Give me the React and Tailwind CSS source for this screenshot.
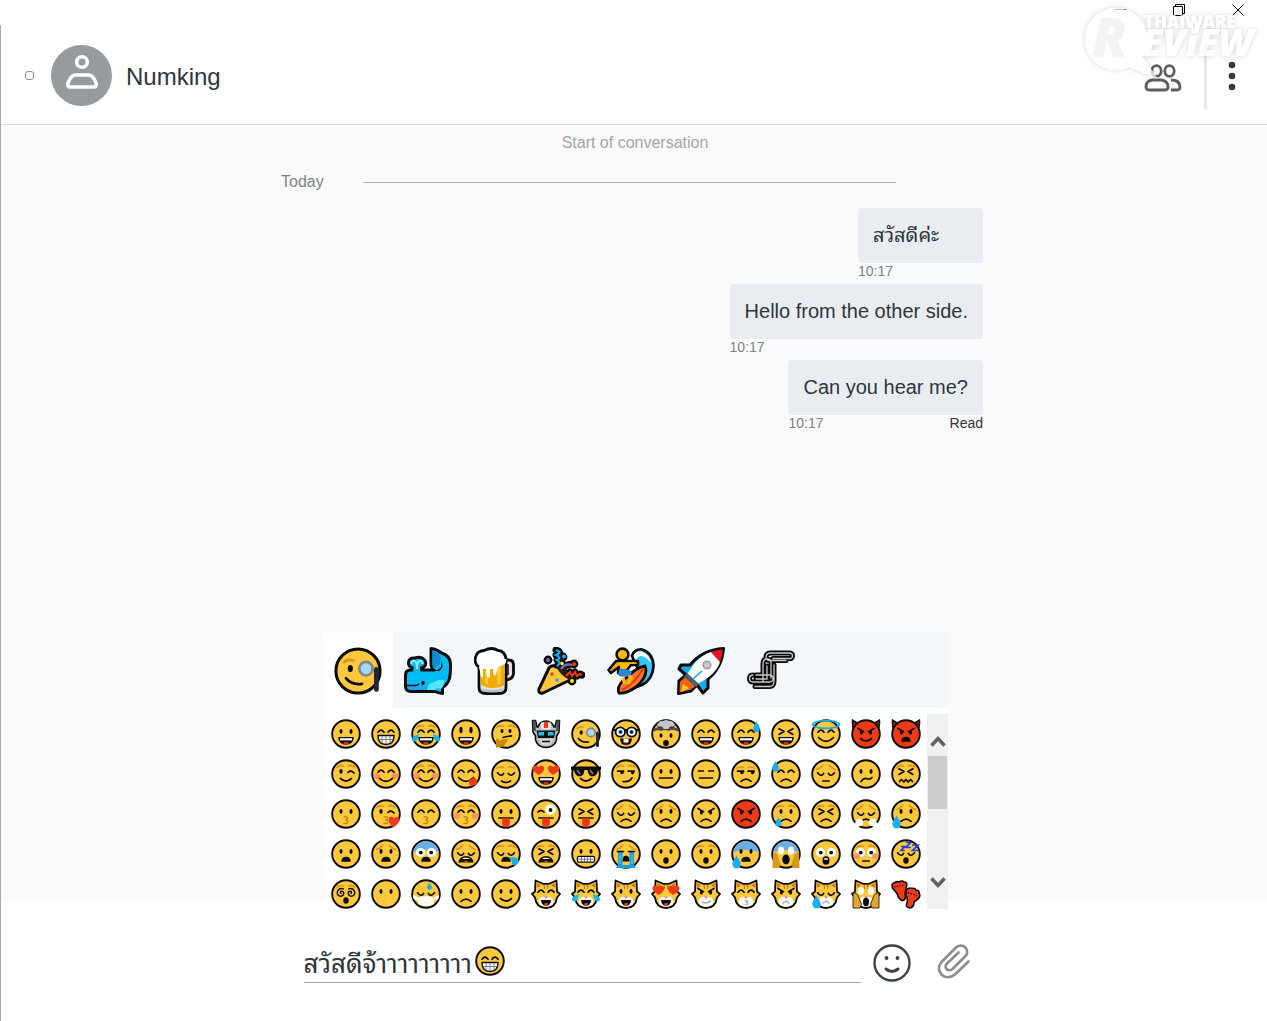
import React from "react";

const INK = "#0b0b0b";
const SKIN = "#ffc83d";
const BROWN = "#d99a1c";
const RED = "#f03a17";
const BLUE = "#00bcf2";

const line = { fill: "none", stroke: INK, strokeWidth: 1.7, strokeLinecap: "round", strokeLinejoin: "round" };
const browLine = { fill: "none", stroke: BROWN, strokeWidth: 1.8, strokeLinecap: "round" };

const eyeShapes = {
  dots: <g fill={INK}><ellipse cx="10" cy="12.4" rx="1.5" ry="2.3" /><ellipse cx="20" cy="12.4" rx="1.5" ry="2.3" /></g>,
  tall: <g fill={INK}><ellipse cx="10" cy="11" rx="1.6" ry="3.3" /><ellipse cx="20" cy="11" rx="1.6" ry="3.3" /></g>,
  happy: <path {...line} d="M7 13.2q3-4 6 0M17 13.2q3-4 6 0" />,
  shut: <path {...line} d="M6.600 13.800q3.200 4.600 6 0.600M17.400 14.400q2.800 4 6-.6" />,
  dash: <path {...line} d="M7.500 12h4.800M17.700 12h4.800" />,
  squint: <path {...line} d="M8 9.800l5 2.800-5 2.800M22 9.800l-5 2.800 5 2.800" />,
  wink: <g><ellipse cx="10" cy="12.400" rx="1.600" ry="2.400" fill={INK} /><path {...line} d="M17 13.400q3-2.800 6 .6" /></g>,
  side: <g><path {...line} d="M6.600 12.200h6M17.200 12.200h6" /><circle cx="11" cy="13.600" r="1.700" fill={INK} /><circle cx="21.600" cy="13.600" r="1.700" fill={INK} /></g>,
  angry: <g><path {...line} d="M7 9.500l5.500 3.200M23 9.500l-5.500 3.200" /><ellipse cx="10.400" cy="13.600" rx="1.500" ry="2.100" fill={INK} /><ellipse cx="19.600" cy="13.600" rx="1.500" ry="2.100" fill={INK} /></g>,
  wide: <g><circle cx="9.500" cy="13.500" r="4.600" fill="#fff" /><circle cx="20.500" cy="13.500" r="4.600" fill="#fff" /><circle cx="9.800" cy="13.600" r="1.900" fill={INK} /><circle cx="20.200" cy="13.600" r="1.900" fill={INK} /></g>,
  hearts: <path fill={RED} d="M1.500 9C1.500 6 6 5.500 7.500 8C10 5.500 14 7 13 10.500C12.400 13 9.500 14.500 8 16C5.500 14.500 1.500 12 1.500 9ZM28.500 9C28.500 6 24 5.500 22.500 8C20 5.500 16 7 17 10.500C17.600 13 20.500 14.500 22 16C24.500 14.500 28.500 12 28.500 9Z" />,
  spiral: <path {...line} strokeWidth="1.400" d="M10 14.500q-1.500-1.500.5-2.300q2.600 0 2.200 2.500q-1 3.300-4.500 2.200q-3-2-1.400-5.200q2-3 5.500-1.800M20 14.500q1.500-1.500-.5-2.300q-2.600 0-2.200 2.500q1 3.300 4.500 2.200q3-2 1.400-5.200q-2-3-5.500-1.800" />,
};

const openMouth = (
  <g>
    <path d="M7.300 18H22.700C22.700 23 19.500 25.700 15 25.700S7.300 23 7.300 18Z" fill={INK} />
    <path d="M9 19.200H21V21.400H9Z" fill="#fff" />
    <path d="M11.500 24.300Q15 21.600 18.500 24.300Q15 25.600 11.500 24.300Z" fill={RED} />
  </g>
);
const tongue = (
  <g>
    <path {...line} d="M8 19H22" />
    <path d="M11.100 19.300H18.900V24.500Q18.600 28.200 15 28.200Q11.400 28.200 11.100 24.500Z" fill={RED} />
    <path d="M15 20v4" stroke="#b9230c" strokeWidth="1" />
  </g>
);
const mouthShapes = {
  open: openMouth,
  tongue,
  teeth: (
    <g>
      <path d="M7 16.500H23C23 22.500 20 25.500 15 25.500S7 22.500 7 16.500Z" fill="#fff" stroke={INK} strokeWidth="1.400" />
      <path d="M7.500 20.500H22.500M11 17v7M15 17v8M19 17v7" stroke="#53627c" strokeWidth=".8" fill="none" />
    </g>
  ),
  smile: <path {...line} d="M9.500 19.500Q15 24.500 20.500 19.500" />,
  wideSmile: <path {...line} d="M7.500 18.500Q15 26 22.500 18.500" />,
  small: <path {...line} d="M10.500 22Q15 25 19.500 22" />,
  flat: <path {...line} d="M8.500 19H21.500" />,
  shortFlat: <path {...line} d="M11.800 22H18.200" />,
  frown: <path {...line} d="M10 22.400Q15 17.800 20 22.400" />,
  bigFrown: <path d="M10.300 22.800Q10.300 17.800 15 17.800T19.700 22.800Z" fill={INK} />,
  smirk: <path {...line} d="M12 22.500Q18 23.500 21 19" />,
  skew: <path {...line} d="M10 22.500Q13 18.500 16 19.700T21 18.500" />,
  wavy: <path {...line} d="M8.500 22.500L10.500 20.500L12.800 23L15 20.500L17.200 23L19.500 20.500L21.500 22.500" />,
  o: <ellipse cx="15" cy="21.500" rx="2.700" ry="3.200" fill={INK} />,
  shout: <g><ellipse cx="15" cy="21.500" rx="3.500" ry="4.200" fill={INK} /><path d="M13.200 19.300h3.600v1.500h-3.600Z" fill="#fff" /></g>,
  wail: <g><path d="M7.500 23.500Q8.500 17 15 17T22.500 23.500Z" fill={INK} /><path d="M10.500 20Q15 17 19.500 20Z" fill="#fff" /><path d="M12 23Q15 20.500 18 23Z" fill={RED} /></g>,
  kiss: <path fill="none" stroke="#c98a12" strokeWidth="1.500" strokeLinecap="round" d="M13 18q4.300-.8 3.500 1.400q-.5 1.200-2.500 1.500q3.400.2 3 2q-.6 1.900-4 1.400" />,
  grimace: <g><rect x="6.500" y="17.300" width="17" height="5.900" rx="1.500" fill="#fff" stroke={INK} strokeWidth="1.300" /><path d="M7.500 20.200h15M10.500 18v5M13.500 18v5M16.500 18v5M19.500 18v5" stroke="#53627c" strokeWidth=".8" /></g>,
};

const browShapes = {
  up: <path {...browLine} d="M6 8.500Q8.500 5.500 12.500 7M17.500 7Q21.500 5.500 24 8.500" />,
  sad: <path {...browLine} d="M5.500 10.500Q9.500 9.500 11.500 6.500M18.500 6.500Q20.500 9.500 24.500 10.500" />,
  low: <path {...browLine} d="M6 9Q10 7.500 12.500 8.500M17.500 8.500Q20 7.500 24 9" />,
};

const drop = (x, y, s = 1) => (
  <path transform={`translate(${x} ${y}) scale(${s})`} d="M0-4.500C1 -2 3 -.5 3 2A3 3 0 0 1-3 2C-3-.5-1-2 0-4.500Z" fill="#19aef0" />
);

const extraShapes = {
  blush: <g fill="#ff8a63" opacity=".85"><circle cx="6" cy="17" r="3" /><circle cx="24" cy="17" r="3" /></g>,
  joy: <g fill={BLUE}><path d="M8 15C7 20.500 5 23.500 2.500 22.300C-.5 20.500 1 17 8 15Z" /><path d="M22 15C23 20.500 25 23.500 27.500 22.300C30.500 20.500 29 17 22 15Z" /></g>,
  sweatRight: drop(25.500, 7.500, 1.1),
  sweatLeft: drop(4.500, 7, 1.1),
  tearLeft: drop(7.500, 22.500, 1),
  tearEdge: drop(5.500, 22.500, 1.400),
  snot: <path d="M19 18.500Q26 17.500 27.500 21.500Q27 26.500 22.500 26Q20.500 25 20.800 22Q19 21 19 18.500Z" fill="#19aef0" />,
  halo: <ellipse cx="15" cy="5.500" rx="13.300" ry="3.900" fill="none" stroke="#12aeef" strokeWidth="1.800" />,
  lick: <path d="M17.500 21Q21.500 20 22.500 18.500Q26.500 19.500 26.500 24Q23 28 18.500 26Z" fill={RED} />,
  heart: <path d="M17.500 21C17 17.500 21.500 16.500 23 19.500C25 16.500 29.500 18 28.500 22C27 25 23.500 27 22.500 28.500C20 26 18 24 17.500 21Z" fill={RED} />,
  bigWink: <g><circle cx="19.500" cy="10.500" r="5.200" fill="#fff" /><circle cx="19.500" cy="11" r="1.900" fill={INK} /><path {...line} d="M7 13q3-3 6 0" /></g>,
  hand: <path d="M5 28.500V20.500Q6.500 18 8.500 21.500Q13 19.500 18 20.500Q15.500 22 14.500 24.500Q13 28.800 5 28.500Z" fill="#c88a00" />,
  thinking: <g><path {...line} d="M12 18.500Q15 17.500 20.500 16.800" /><ellipse cx="11" cy="12" rx="1.500" ry="2.100" fill={INK} /><ellipse cx="19" cy="12" rx="1.500" ry="2.100" fill={INK} /></g>,
  shades: <g><path d="M0 7.500H30V11L27 11Q26 17.500 21 17.500Q17 16.500 16.500 11H13.500Q13 17.500 8 17.500Q4 16.500 3 11H0Z" fill={INK} /><path d="M6 11l3 4M19 11l3 4" stroke="#77818a" strokeWidth="1.600" /></g>,
  nerd: (
    <g>
      <path d="M1 11H29" stroke={INK} strokeWidth="2" />
      <circle cx="9.300" cy="13" r="4.700" fill="#fff" stroke={INK} strokeWidth="1.800" />
      <circle cx="20.700" cy="13" r="4.700" fill="#fff" stroke={INK} strokeWidth="1.800" />
      <circle cx="9.500" cy="13" r="2.300" fill="#38aee5" /><circle cx="20.500" cy="13" r="2.300" fill="#38aee5" />
      <circle cx="9.500" cy="13" r="1.400" fill={INK} /><circle cx="20.500" cy="13" r="1.400" fill={INK} />
      <path d="M9 19.500H21Q20.500 26.300 15 26.300T9 19.500Z" fill={INK} /><path d="M12.500 19.500h5v4h-5Z" fill="#fff" />
      <path d="M12.500 25.300q2.500-1.500 5 0Z" fill={RED} />
    </g>
  ),
  monocle: (
    <g>
      <path d="M6.500 9.500Q8.500 7 12 8.500" {...browLine} />
      <ellipse cx="10.200" cy="13.500" rx="1.600" ry="2.200" fill={INK} />
      <path {...line} d="M7.500 19.500Q11 24 17.500 23" />
      <path d="M26.500 14V26.500" stroke="#24272b" strokeWidth="3" strokeLinecap="round" />
      <circle cx="20" cy="13.500" r="4.200" fill="#a9d8f2" stroke="#808890" strokeWidth="1.700" />
    </g>
  ),
  blown: (
    <g>
      <path d="M2.500 9.500Q15 5 27.500 9.500L27 12.500Q21 10 18 12Q14 10 10 12Q7 10.500 3 12.500Z" fill="#4b4f54" />
      <path d="M8 8Q4 6.500 7 4Q8 .8 12 1.500Q15-.5 18 1.500Q22 .8 23 4Q26 6.500 22 8Q19 6.500 17.500 10.500H12.500Q11 6.500 8 8Z" fill="#c4c7ca" stroke={INK} strokeWidth=".7" />
      <ellipse cx="10" cy="16.500" rx="1.500" ry="2.300" fill={INK} /><ellipse cx="20" cy="16.500" rx="1.500" ry="2.300" fill={INK} />
      <circle cx="15" cy="24" r="2.900" fill={INK} />
    </g>
  ),
  coldTop: <path d="M2 13A13.200 13.200 0 0 1 28 13Q15 9 2 13Z" fill="#6eaee8" />,
  mask: <g><path d="M2 16L8 18.500Q15 15.500 22 18.500L28 16L27.500 20L23 21.500V25Q15 29 7 25V21.500L2.500 20Z" fill="#fff" />{drop(18.500, 7, .8)}</g>,
  steam: <g fill="#fff"><circle cx="8.500" cy="23.500" r="3.700" /><circle cx="21.500" cy="23.500" r="3.700" /><circle cx="5.500" cy="26" r="2.700" /><circle cx="24.500" cy="26" r="2.700" /></g>,
  rivers: <g><path d="M7 13h4.500V26H18.500V13H23V26L25 29H5L7 26Z" fill="#159fe5" /><path d="M9 16v9M21 16v9" stroke="#66d2fa" strokeWidth="1" /><path {...line} d="M6.500 12.500h6M17.500 12.500h6" /><path d="M11.500 22.500Q11.500 16.500 15 16.500T18.500 22.500Z" fill={INK} /></g>,
  zzz: <g fill="none" stroke="#1743e8" strokeWidth="1.700"><path d="M10 7.500h3.500l-3.500 4h3.800M14.800 3.500h4.700L15 8.500h5M21 6h6l-5.500 5.500H28" /></g>,
  scream: (
    <g>
      <path d="M2 14Q5 12 7 17L9.500 25L8 29H1.500ZM28 14Q25 12 23 17L20.500 25L22 29H28.500Z" fill="#d99a1c" />
      <ellipse cx="10" cy="11.500" rx="3" ry="3.900" fill="#fff" /><ellipse cx="20" cy="11.500" rx="3" ry="3.900" fill="#fff" />
      <ellipse cx="15" cy="20.500" rx="3.700" ry="5" fill={INK} />
    </g>
  ),
};

function Face({ eyes, mouth, brows, extras = [], color = SKIN, horns }) {
  return (
    <>
      {horns && <path d="M1.500 1Q5 4 10 4L3 12Q.8 7 1.500 1ZM28.500 1Q25 4 20 4L27 12Q29.200 7 28.500 1Z" fill="#8e1510" stroke={INK} strokeWidth="1.300" />}
      <circle cx="15" cy="15" r="13.800" fill={color} stroke={INK} strokeWidth="1.900" />
      {extras.includes("coldTop") && extraShapes.coldTop}
      {brows && browShapes[brows]}
      {eyes && eyeShapes[eyes]}
      {mouth && mouthShapes[mouth]}
      {extras.filter((e) => e !== "coldTop").map((e) => <g key={e}>{extraShapes[e]}</g>)}
    </>
  );
}

const catMouths = {
  grin: <g><path d="M10 21H20Q19.500 26.800 15 26.800T10 21Z" fill={INK} /><path d="M12.500 25.300Q15 22.500 17.500 25.300Q15 26.800 12.500 25.300Z" fill={RED} /></g>,
  smirk: <path d="M11 23Q17 25.500 20 21.500" stroke="#a9abad" strokeWidth="1.500" fill="none" />,
  kiss: <path d="M13.500 21.500q4-.5 2.500 1.500l-1.500.5q3.500.5 2 2l-3 .5" stroke="#a9abad" strokeWidth="1.200" fill="none" />,
  frown: <path d="M11.500 24.500Q15 20 18.500 24.500" stroke="#a9abad" strokeWidth="1.400" fill="none" />,
  scream: <ellipse cx="15" cy="23" rx="3" ry="4.200" fill={INK} />,
};

function Cat({ eyes, mouth, extras = [], paws }) {
  return (
    <>
      <path d="M4.500 1.500L12 4.800H18L25.500 1.500L26 12.500L29 15L26 18.500C25 25.500 21 29 15 29S5 25.500 4 18.500L1 15L4 12.500Z" fill={SKIN} stroke={INK} strokeWidth="1.800" strokeLinejoin="round" />
      <path d="M6 4L10 6L6.500 9ZM24 4L20 6L23.500 9ZM12.500 5.700H14V10H13ZM16 5.700H17.500L17 10H16Z" fill="#c5761d" />
      <ellipse cx="15" cy="22.500" rx="7.500" ry="5.300" fill="#fff" />
      {eyes === "scream"
        ? <g fill="#fff"><ellipse cx="10" cy="12" rx="3" ry="4" /><ellipse cx="20" cy="12" rx="3" ry="4" /></g>
        : eyeShapes[eyes]}
      <path d="M13 17.300h4L15 20Z" fill="#ff7d63" />
      {catMouths[mouth]}
      {paws && <path d="M2 14Q6 13 8 19L10.500 25L9 29H2ZM28 14Q24 13 22 19L19.500 25L21 29H28Z" fill="#e8a529" stroke={INK} strokeWidth=".8" />}
      {extras.map((e) => <g key={e}>{extraShapes[e]}</g>)}
    </>
  );
}

function Robot() {
  return (
    <>
      <path d="M1.500 1.500H4.500L6 8H7Q9 2 15 2T23 8H24L25.500 1.500H28.500L28 13L25.500 17V21Q23 28.500 15 28.500T4.500 21V17L2 13Z" fill="#b8bdc2" stroke={INK} strokeWidth="1.600" strokeLinejoin="round" />
      <path d="M1.500 1.500H4.500L5 12H2.500ZM25.500 1.500H28.500L27.500 12H25Z" fill="#4b5057" />
      <path d="M10 3.500h10v7H10Z" fill="#e5e8ea" /><path d="M13 3h4v6h-4Z" fill={RED} />
      <path d="M5.500 11.500H24.500L23 19H7Z" fill={INK} />
      <path d="M7.500 13H13v3.500H7.500ZM17 13h5.500v3.500H17Z" fill="#1fc1ee" />
      <path d="M8 20H22L19 26H11Z" fill="#d5d9dc" /><path d="M11 22.500h8" stroke={INK} strokeWidth="1.500" />
    </>
  );
}

function Footprints() {
  return (
    <g fill={RED} stroke={INK} strokeWidth="1.600" strokeLinejoin="round">
      <path d="M1.500 9Q0 4 4 3.500Q6 2 8 3Q11 1 13 3Q16.500 3 15.500 7L14.500 12Q14 16 14.500 19Q13 22.500 10 21Q7 19 6 14.500Z" />
      <path d="M15.500 11Q18 8 21 9.500Q24 8.500 25 11Q28.500 11 28 14Q30 17 27 20L23 23Q23 28.500 18.500 29Q14 28 16 24Q17 20 15 16Z" />
      <path d="M3 8L13.500 6M17 13.500L27 17" strokeWidth="1.100" strokeDasharray="1.500 1.200" />
    </g>
  );
}

const f = (label, eyes, mouth, brows, extras, rest) => ({ label, eyes, mouth, brows, extras: extras ?? [], ...rest });
const cat = (label, eyes, mouth, extras, rest) => ({ label, kind: "cat", eyes, mouth, extras: extras ?? [], ...rest });
const grinCheesy = f("Beaming face", "happy", "teeth");

const emojis = [
  f("Grinning face", "dots", "open"),
  grinCheesy,
  f("Tears of joy", "happy", "open", "up", ["joy"]),
  f("Big smile", "tall", "open"),
  f("Thinking", null, null, "up", ["thinking", "hand"]),
  { label: "Robot", kind: "robot" },
  f("Monocle", null, null, null, ["monocle"]),
  f("Nerd", null, null, null, ["nerd"]),
  f("Mind blown", null, null, null, ["blown"]),
  f("Smiling eyes", "happy", "open"),
  f("Nervous grin", "happy", "open", null, ["sweatRight"]),
  f("Laughing", "squint", "open"),
  f("Angel", "happy", "wideSmile", null, ["halo"]),
  f("Smiling devil", "angry", "smile", null, [], { color: RED, horns: true }),
  f("Angry devil", "angry", "bigFrown", null, [], { color: RED, horns: true }),

  f("Winking", "wink", "smile", "up"),
  f("Blushing", "happy", "wideSmile", null, ["blush"]),
  f("Warm smile", "happy", "wideSmile", "up", ["blush"]),
  f("Yummy", "happy", "wideSmile", null, ["lick"]),
  f("Relieved", "shut", "small", "low"),
  f("Heart eyes", "hearts", "open"),
  f("Sunglasses", null, "smile", null, ["shades"]),
  f("Smirking", "side", "smirk", "up"),
  f("Neutral", "dots", "flat"),
  f("Expressionless", "dash", "flat"),
  f("Unamused", "side", "frown", "low"),
  f("Cold sweat", "happy", "frown", null, ["sweatLeft"]),
  f("Pensive", "shut", "shortFlat", "sad"),
  f("Confused", "dots", "skew"),
  f("Confounded", "squint", "wavy", "up"),

  f("Kissing", "dots", "kiss"),
  f("Blowing a kiss", "wink", "kiss", "up", ["heart"]),
  f("Kissing with smiling eyes", "happy", "kiss"),
  f("Kissing with blush", "happy", "kiss", "up", ["blush"]),
  f("Tongue out", "dots", "tongue"),
  f("Winking tongue out", null, "tongue", null, ["bigWink"]),
  f("Squinting tongue out", "squint", "tongue"),
  f("Disappointed", "shut", "frown", "sad"),
  f("Worried", "dots", "frown", "sad"),
  f("Angry", "angry", "frown"),
  f("Furious", "angry", "frown", null, [], { color: RED }),
  f("Crying", "dots", "frown", "up", ["tearLeft"]),
  f("Persevering", "squint", "frown", "up"),
  f("Triumphant", "shut", "frown", "sad", ["steam"]),
  f("Sad but relieved", "dots", "frown", "sad", ["tearEdge"]),

  f("Frowning, open mouth", "dots", "bigFrown"),
  f("Anguished", "dots", "bigFrown", "sad"),
  f("Fearful", "wide", "bigFrown", null, ["coldTop"]),
  f("Weary", "shut", "wail", "sad"),
  f("Sleepy", "shut", "bigFrown", "up", ["snot"]),
  f("Tired", "squint", "wail", "up"),
  f("Grimacing", "dots", "grimace"),
  f("Sobbing", null, null, "sad", ["rivers"]),
  f("Surprised", "dots", "o"),
  f("Hushed", "dots", "o", "up"),
  f("Anxious", "dots", "bigFrown", null, ["coldTop", "tearEdge"]),
  f("Screaming", null, null, null, ["coldTop", "scream"]),
  f("Astonished", "wide", "shout"),
  f("Flushed", "wide", "shortFlat", "up", ["blush"]),
  f("Sleeping", "shut", "o", null, ["zzz"]),

  f("Dizzy", "spiral", "o", "up"),
  f("No mouth", "dots"),
  f("Medical mask", "shut", null, null, ["mask"]),
  f("Slight frown", "dots", "frown"),
  f("Slight smile", "dots", "smile"),
  cat("Grinning cat", "happy", "grin"),
  cat("Cat with tears of joy", "happy", "grin", ["joy"]),
  cat("Smiling cat", "dots", "grin"),
  cat("Heart eyes cat", "hearts", "grin"),
  cat("Smirking cat", "angry", "smirk"),
  cat("Kissing cat", "happy", "kiss"),
  cat("Pouting cat", "angry", "frown"),
  cat("Crying cat", "shut", "frown", ["tearEdge"]),
  cat("Screaming cat", "scream", "scream", [], { paws: true }),
  { label: "Footprints", kind: "feet" },
];

function Emoji({ item, className = "size-[30px]" }) {
  const { kind, label, ...parts } = item;
  return (
    <svg viewBox="0 0 30 30" className={className} aria-hidden="true">
      {kind === "robot" ? <Robot /> : kind === "feet" ? <Footprints /> : kind === "cat" ? <Cat {...parts} /> : <Face {...parts} />}
    </svg>
  );
}

const Whale = () => (
  <svg viewBox="0 0 48 48" className="size-12" aria-hidden="true">
    <path d="M27 1.500C32 2 35 4 37.500 6C44 8 47 12 46.500 19C46.500 29 46 36 38.500 40.500V46.500Q34 46 31 44.500H7Q1.500 44.500 1.500 39V28Q1.500 23 6.500 23H8V20.500Q4.500 20 4.500 15.500Q5 10.500 11 11Q16 9 19.500 12Q22.500 14 21.500 18Q20 20.500 17.500 20.500V23H30Q27 21 27 16Z" fill="#00bcf2" stroke={INK} strokeWidth="3" strokeLinejoin="round" />
    <path d="M28.500 3Q36 5 37 12Q36 18 30 22Q28 20 28.500 16Z" fill="#0c8fd0" />
    <path d="M16 23H33Q39 21 37 14Q41 20 35 24H16Z" fill={INK} />
    <path d="M7.500 17Q7 13.500 10 14Q13 14 13 22M18.500 17Q18 13 15.500 14Q13 15 13 20" fill="none" stroke="#8fe5f8" strokeWidth="2.200" />
    <path d="M3 39H28Q30 36 29 43H7Q3 43 3 39Z" fill="#1ba8e8" />
    <path d="M3 38.500H11Q14 38.500 15 36.500" fill="none" stroke={INK} strokeWidth="1.600" />
    <ellipse cx="19" cy="36" rx="1.600" ry="2.200" fill={INK} />
    <path d="M23 43Q23 37 30 35Q35 32 40 33Q41 38 37 42Q33 40 31 43Z" fill="#50e6ff" />
  </svg>
);

const Beer = () => (
  <svg viewBox="0 0 41 48" className="h-12 w-[41px]" aria-hidden="true">
    <path d="M30 13H35Q39.500 13 39.500 18V27Q38.500 33 30 33" fill="#e7dedd" stroke={INK} strokeWidth="2.800" />
    <path d="M31 18H34V27L31 29Z" fill="#fff" stroke={INK} strokeWidth="1.500" />
    <path d="M5 15V41Q5 46.500 12 46.500H25Q32 46.500 32 41V15Z" fill="#e4e4e4" stroke={INK} strokeWidth="2.800" />
    <path d="M6.500 17H30.500V38Q26 41 18.500 41T6.500 37Z" fill="#f2a900" />
    <path d="M23 18h4v19h-4ZM11 24h3v13h-3Z" fill="#ffc83d" />
    <path d="M7 41Q18 45 30 41L29 44Q18 47 8 44Z" fill="#bdbfc1" />
    <path d="M5 20Q0 17 1.500 10Q3 4 10 3.500Q18-.5 24 3.500Q31 4 32 10Q33 15 31 17Q27 19 24 20L22 27Q20 31 19 25V22H16V30Q14 32 13 29L12 22H9V30Q6.500 31 6.500 27Z" fill="#fff" />
    <path d="M5 20Q0 17 1.500 10Q3 4 10 3.500Q18-.5 24 3.500Q31 4 32 12" fill="none" stroke={INK} strokeWidth="2.800" />
  </svg>
);

const Popper = () => (
  <svg viewBox="0 0 48 48" className="size-12" aria-hidden="true">
    <path d="M19 3Q26 5 19 8Q25 11 20 13Q25 16 20 19M24 22Q29 17 36 17M29 29l4-4 2 4 3-4 2 4 3-2 2 1" fill="none" stroke={INK} strokeWidth="7" strokeLinecap="round" strokeLinejoin="round" />
    <g fill={INK}><circle cx="11" cy="13" r="4.400" /><circle cx="26" cy="10" r="4.400" /><circle cx="25" cy="17" r="4.400" /><circle cx="37" cy="17" r="4.400" /><circle cx="35" cy="34" r="4.400" /></g>
    <path d="M19 20Q31 20 33 33L6 46Q1 47 2 42L12 21Q15 17 19 20Z" fill={SKIN} stroke={INK} strokeWidth="3" strokeLinejoin="round" />
    <path d="M19 20Q32 18 33 33Q25 30 19 20Z" fill="#2a1a12" />
    <path d="M19 3Q26 5 19 8Q25 11 20 13Q25 16 20 19" fill="none" stroke="#18a8ed" strokeWidth="2.300" />
    <path d="M24 22Q28 16 35 18" fill="none" stroke="#8661c5" strokeWidth="2.300" />
    <path d="M29 29l4-4 2 4 3-4 2 4 3-2 2 1" fill="none" stroke={RED} strokeWidth="2" />
    <circle cx="11" cy="13" r="1.900" fill="#8661c5" /><circle cx="27" cy="9.500" r="2" fill="#18a8ed" /><circle cx="25" cy="16.500" r="1.800" fill="#fff100" />
    <circle cx="37" cy="17" r="2" fill={RED} /><circle cx="35" cy="34" r="2" fill="#fff100" />
    <circle cx="15" cy="27" r="1.700" fill={RED} /><circle cx="20" cy="33" r="1.700" fill="#18a8ed" />
  </svg>
);

const Surfer = () => (
  <svg viewBox="0 0 48 48" className="size-12" aria-hidden="true">
    <path d="M25 9Q27 2 35 2.500Q46 6 46.500 19Q46 32 35 38L24 42L31 22Z" fill="#32c8f4" stroke={INK} strokeWidth="2.800" strokeLinejoin="round" />
    <path d="M26.500 9Q29 3.500 35 4.500Q43 8 44 16Q38 8 33 9Q30 10 29 14Z" fill="#fff" />
    <path d="M12 46Q9 39 19 31Q30 20 38 19Q42 29 29 40Q19 47 12 46Z" fill="#f7752f" stroke={INK} strokeWidth="2.800" />
    <path d="M15 43Q27 37 36 22" stroke="#d83b01" strokeWidth="2" fill="none" />
    <path d="M9 14H31V18H24L20 23L14 28L11 26L12 20L4 26L1.500 23Z" fill="#f5a800" stroke={INK} strokeWidth="2.600" strokeLinejoin="round" />
    <path d="M21 27l3 4-3 6M16 31l2 6" fill="none" stroke="#ffb900" strokeWidth="3.500" />
    <path d="M13 21L22 23Q26 24 24 28L16 30L11 27Z" fill="#2b88d8" />
    <path d="M10 15.500H29V17H23L19 22L13 21.500V18Z" fill="#ffb900" />
    <circle cx="15.500" cy="7.500" r="5.900" fill="#ffb900" stroke={INK} strokeWidth="2.600" />
  </svg>
);

const Rocket = () => (
  <svg viewBox="0 0 48 48" className="size-12" aria-hidden="true">
    <path d="M13 18H4L2 22L9 28L2 34L1.500 46.500L14 44L20 38L26 46L31 41V32Q45 21 46.500 1.500Q25 3 13 18Z" fill="#18a8ed" stroke={INK} strokeWidth="3" strokeLinejoin="round" />
    <path d="M8 30L18 40L12 43L2.500 45.500L3 35Z" fill="#f7630c" /><path d="M6 37l6 4-8 4Z" fill="#ffc83d" />
    <path d="M34 5Q20 9 10 28L20 37Q39 28 43 15Z" fill="#fff" />
    <path d="M34 5Q41 2.500 45.500 2.500Q45.500 9 43 15Z" fill="#e81224" />
    <path d="M10 26L22 37L19 40L7 30Z" fill="#535b65" />
    <path d="M16 32L25 24" stroke="#18a8ed" strokeWidth="1.600" />
    <circle cx="30" cy="18" r="3.800" fill="#c7c7c7" stroke="#999" strokeWidth="1.500" />
  </svg>
);

const Clips = () => {
  const d = "M39 13.500H23Q19 13.500 19 10T23 6H42Q45.500 6 45.500 9T42 11.500H26M16 34V17Q16 12 20 12Q24 12 24 16V31M27 34V18M20 32V19M9 28H22Q26 28 26 31.500T22 35H6Q2.500 35 2.500 31.500T6 28M8 39.500H23Q27 39 27 34M9 32H20";
  return (
    <svg viewBox="0 0 48 48" className="size-12" fill="none" strokeLinecap="round" strokeLinejoin="round" aria-hidden="true">
      <path d={d} stroke={INK} strokeWidth="5" />
      <path d={d} stroke="#c8c8c8" strokeWidth="1.300" />
    </svg>
  );
};

const categories = [
  { label: "Faces", icon: <Emoji item={emojis[6]} className="size-12" /> },
  { label: "Nature", icon: <Whale /> },
  { label: "Food", icon: <Beer /> },
  { label: "Celebration", icon: <Popper /> },
  { label: "Activities", icon: <Surfer /> },
  { label: "Travel", icon: <Rocket /> },
  { label: "Objects", icon: <Clips /> },
];

function EmojiPicker() {
  return (
    <section aria-label="Emoji picker" className="absolute inset-x-0 bottom-[-8px] mx-auto w-[625px] bg-white">
      <div role="tablist" className="flex h-[75px] bg-[#f3f7fa]">
        {categories.map(({ label, icon }, i) => (
          <button key={label} type="button" role="tab" aria-label={label} aria-selected={i === 0} className="flex items-center px-[11px] pt-px aria-selected:bg-white">
            {icon}
          </button>
        ))}
      </div>
      <div className="mt-1.5 flex h-[195px]">
        <div className="grid flex-1 grid-cols-[repeat(15,40px)] grid-rows-[repeat(5,40px)] overflow-hidden pl-[3px]">
          {emojis.map((item) => (
            <button key={item.label} type="button" aria-label={item.label} className="flex items-center justify-center">
              <Emoji item={item} />
            </button>
          ))}
        </div>
        <div className="flex w-[21px] flex-col items-center bg-[#f0f0f0] pt-5">
          <svg viewBox="0 0 16 14" className="h-3.5 w-4" aria-hidden="true"><path d="M1.500 11.500L8 4.500L14.500 11.500" fill="none" stroke="#606060" strokeWidth="3.500" /></svg>
          <div className="mt-2 h-[53px] w-[19px] bg-[#cdcdcd]" />
          <svg viewBox="0 0 16 14" className="mt-auto mb-5 h-3.5 w-4" aria-hidden="true"><path d="M1.500 3.500L8 10.500L14.500 3.500" fill="none" stroke="#606060" strokeWidth="3.500" /></svg>
        </div>
      </div>
    </section>
  );
}

const messages = [
  { text: "สวัสดีค่ะ", time: "10:17" },
  { text: "Hello from the other side.", time: "10:17" },
  { text: "Can you hear me?", time: "10:17", status: "Read" },
];

function Watermark() {
  return (
    <svg viewBox="0 0 187 90" className="pointer-events-none absolute top-0 right-0 h-[90px] w-[187px]" aria-hidden="true">
      <defs>
        <filter id="halo" x="-20%" y="-20%" width="140%" height="140%">
          <feDropShadow dx="0" dy="0" stdDeviation="2.500" floodColor="#000" floodOpacity=".25" />
        </filter>
      </defs>
      <g filter="url(#halo)" fill="#fff" opacity=".75">
        <path d="M34 8A31 31 0 0 1 62 56L78 79L49 67A31 31 0 1 1 34 8Z" />
        <g fontFamily="'Open Sans', 'Liberation Sans', sans-serif" fontWeight="800">
          <text x="64" y="28" fontSize="17">THAiWARE</text>
          <text x="62" y="56" fontSize="37" fontStyle="italic">EViEW</text>
        </g>
      </g>
      <text x="12" y="57" fontSize="54" fontStyle="italic" fontWeight="800" fontFamily="'Open Sans', 'Liberation Sans', sans-serif" fill="#f3f3f3">R</text>
    </svg>
  );
}

export default function App() {
  return (
    <div className="relative flex h-screen min-h-[700px] flex-col overflow-hidden bg-white font-['Liberation_Sans','Noto_Sans_Thai_Looped','Loma',sans-serif] text-[#2f3539]">
      <div className="flex h-[25px] shrink-0 items-start justify-end gap-[47px] pt-1 pr-[23px] text-black">
        <button type="button" aria-label="Minimize">
          <svg viewBox="0 0 12 12" className="size-3" aria-hidden="true"><path d="M0 5.500H12" stroke="currentColor" /></svg>
        </button>
        <button type="button" aria-label="Restore">
          <svg viewBox="0 0 12 12" className="size-3" fill="none" stroke="currentColor" aria-hidden="true"><path d="M.5 2.500H9.500V11.500H.5ZM2.500 2.500V.5H11.500V9.500H9.500" /></svg>
        </button>
        <button type="button" aria-label="Close">
          <svg viewBox="0 0 12 12" className="size-3" fill="none" stroke="currentColor" aria-hidden="true"><path d="M.5 .5L11.500 11.500M11.500 .5L.5 11.500" /></svg>
        </button>
      </div>

      <div className="flex min-h-0 flex-1 flex-col border-l border-[#a9a9a9]">
        <header className="flex h-[100px] shrink-0 items-center border-b border-[#dcdcdc] pt-0.5 pl-6">
          <span className="size-[9px] rounded-[3px] border border-[#8e9193]" />
          <span className="ml-[17px] flex size-[61px] items-center justify-center rounded-full bg-[#979b9e]">
            <svg viewBox="0 0 36 36" className="-mt-2 size-9" fill="none" stroke="#fff" strokeWidth="3.600" aria-hidden="true">
              <circle cx="18" cy="8" r="5.300" />
              <path d="M11.500 21H24.500Q29 21 32 29Q33 33 29.500 33H6.500Q3 33 4 29Q7 21 11.500 21Z" />
            </svg>
          </span>
          <h1 className="ml-3.5 pt-0.5 text-2xl">Numking</h1>
          <button type="button" aria-label="Add people" className="ml-auto">
            <svg viewBox="0 0 38 30" className="mt-1 h-[30px] w-[38px]" fill="none" stroke="#5c5e60" strokeWidth="2.800" aria-hidden="true">
              <ellipse cx="12.500" cy="8" rx="4.700" ry="5.300" /><ellipse cx="25.500" cy="8" rx="4.700" ry="5.300" />
              <path d="M8 17H17.500Q24 18 24 24Q24 27 21 27H5Q2 27 2 24Q2 18 8 17ZM27 17Q36 17 36 24Q36 27 33 27H27" />
            </svg>
          </button>
          <span className="mt-1 ml-[22px] h-[63px] w-[3px] bg-[#e9e9e6]" />
          <button type="button" aria-label="More options" className="mr-[31px] ml-[21px]">
            <svg viewBox="0 0 8 30" className="h-[30px] w-2" fill="#343a3e" aria-hidden="true"><circle cx="4" cy="4" r="3.300" /><circle cx="4" cy="15" r="3.300" /><circle cx="4" cy="26" r="3.300" /></svg>
          </button>
        </header>

        <main className="relative min-h-0 flex-1 bg-[#fafafa] pl-0.5">
          <div className="mx-auto max-w-[708px] pt-2">
            <p className="text-center text-base leading-5 text-[#a3a5a6]">Start of conversation</p>
            <div className="mt-[19px] flex items-center">
              <span className="w-[82px] text-base leading-5 text-[#7f8284]">Today</span>
              <hr className="mr-[93px] flex-1 border-[#b4b4b4]" />
            </div>
            <ol className="mt-4 flex flex-col items-end pr-1.5">
              {messages.map((m) => (
                <li key={m.text} className="min-w-[125px]">
                  <p className="rounded bg-[#e9edf2] px-[15px] py-[14px] text-xl leading-[27px]">{m.text}</p>
                  <div className="flex h-[21px] justify-between text-sm leading-4">
                    <time className="text-[#7f8284]">{m.time}</time>
                    {m.status && <span>{m.status}</span>}
                  </div>
                </li>
              ))}
            </ol>
          </div>
          <div className="absolute right-0 bottom-0 left-[3px]">
            <EmojiPicker />
          </div>
        </main>

        <footer className="flex h-[120px] shrink-0 items-center justify-center gap-3 pl-1.5">
          <div className="flex h-[43px] w-[557px] items-center border-b border-[#a6a6a6]">
            <input aria-label="Message" defaultValue="สวัสดีจ้าาาาาาาาา" className="h-10 w-[171px] bg-transparent text-[26px] outline-none" />
            <Emoji item={grinCheesy} />
          </div>
          <button type="button" aria-label="Insert emoji">
            <svg viewBox="0 0 38 38" className="mt-1 size-[38px]" fill="none" stroke="#3d4246" strokeWidth="2.400" strokeLinecap="round" aria-hidden="true">
              <circle cx="19" cy="19" r="17.500" /><path d="M13 25Q19 30 25 25" strokeWidth="3" /><circle cx="13.500" cy="14" r="1.200" fill="#3d4246" strokeWidth="1.500" /><circle cx="24.500" cy="14" r="1.200" fill="#3d4246" strokeWidth="1.500" />
            </svg>
          </button>
          <button type="button" aria-label="Attach file" className="ml-3.5">
            <svg viewBox="0 0 34 36" className="h-9 w-[34px]" fill="none" stroke="#8b8e90" strokeWidth="2.600" strokeLinecap="round" strokeLinejoin="round" aria-hidden="true">
              <path d="M31.500 18.500L18.500 31Q11 37 5 32Q-1 26 4.500 19L19 4.500Q24 .5 28.500 4.500Q32 9 28.500 13L15.500 26Q12 28.500 9.500 26Q7.500 23 10 20.500L21.500 9.500" />
            </svg>
          </button>
        </footer>
      </div>
      <Watermark />
    </div>
  );
}
